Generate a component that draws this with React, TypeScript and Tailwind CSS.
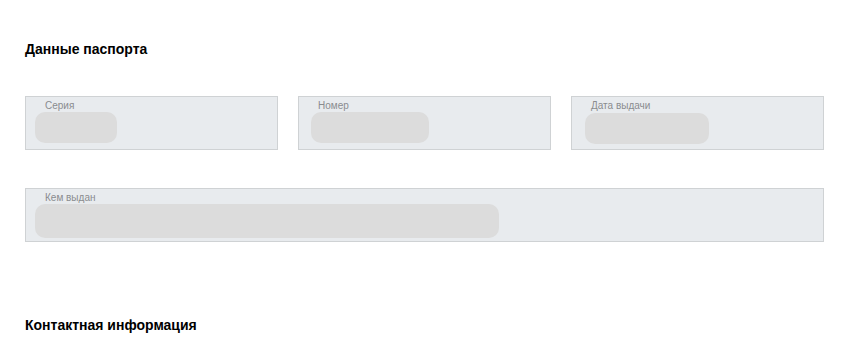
import React from 'react';

// One disabled-looking field: small grey label on top, blurred value placeholder below
function Field({ label, blob, className = '' }: { label: string; blob: string; className?: string }) {
    return (
        <div className={`h-[54px] border border-[#cfd2d4] bg-[#e8ebee] px-[9px] pt-[3px] ${className}`}>
            <div className="pl-[10px] text-[10px] leading-[12px] text-[#8a8c8e]">{label}</div>
            <div className={`rounded-[10px] bg-[#dcdcdc] ${blob}`} />
        </div>
    );
}

export default function App() {
    return (
        <div className="min-h-[355px] w-[859px] bg-white px-[25px] pt-[41px] font-['Liberation_Sans',Arial,sans-serif]">
            <h2 className="text-[14px] font-bold leading-[16px] text-black">Данные паспорта</h2>

            <div className="mt-[39px] grid w-[799px] grid-cols-[253px_253px_253px] gap-x-[20px]">
                <Field label="Серия" blob="h-[31px] w-[82px]" />
                <Field label="Номер" blob="ml-[3px] h-[31px] w-[118px]" />
                <Field label="Дата выдачи" blob="ml-[4px] mt-[1px] h-[31px] w-[124px]" />
            </div>

            <div className="mt-[38px] w-[799px]">
                <Field label="Кем выдан" blob="h-[34px] w-[464px]" />
            </div>

            <h2 className="mt-[75px] text-[14px] font-bold leading-[16px] text-black">Контактная информация</h2>
        </div>
    );
}
